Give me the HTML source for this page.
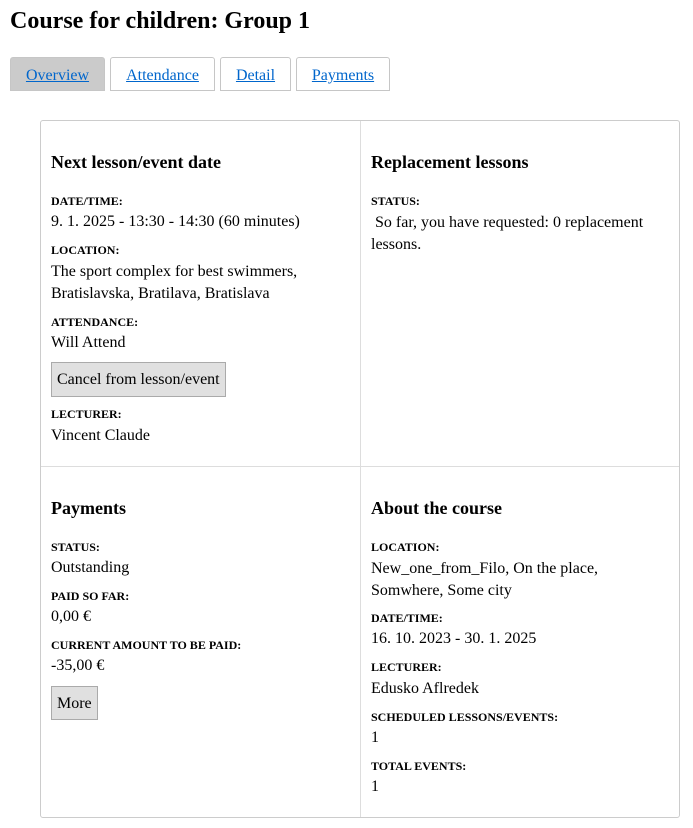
<!DOCTYPE html>
<html><head><meta charset="utf-8"><style>
body{margin:0;background:#fff;font-family:"Liberation Serif",serif;color:#000;width:693px;height:828px;position:relative;overflow:hidden}
.a{position:absolute;white-space:nowrap}
h1{position:absolute;left:10px;top:8px;margin:0;font-size:24px;font-weight:bold}
.tab{position:absolute;top:57px;border:1px solid #c6c6c6;border-radius:3px 3px 0 0;font-size:16px;line-height:36px;text-align:center;box-sizing:border-box;height:34px}
.tab span{color:#0066cc;text-decoration:underline}
.box{position:absolute;left:40px;top:120px;width:640px;height:698px;border:1px solid #ccc;border-radius:3px;box-sizing:border-box}
.h{font-size:18px;font-weight:bold}
.l{font-size:12px;font-weight:bold}
.v{font-size:16px;margin-top:2px}
.btn{position:absolute;background:#e0e0e0;border:1px solid #aaa;font-size:16px;box-sizing:border-box;line-height:34px;padding:0 5px}
</style></head><body>
<h1>Course for children: Group 1</h1>
<div class="tab" style="left:10px;width:95px;background:#cbcbcb"><span>Overview</span></div>
<div class="tab" style="left:110px;width:105px"><span>Attendance</span></div>
<div class="tab" style="left:220px;width:71px"><span>Detail</span></div>
<div class="tab" style="left:296px;width:94px"><span>Payments</span></div>
<div class="box"></div>
<div class="a" style="left:360px;top:121px;width:1px;height:696px;background:#ddd"></div>
<div class="a" style="left:41px;top:466px;width:638px;height:1px;background:#ddd"></div>

<div class="a h" style="left:51px;top:152px">Next lesson/event date</div>
<div class="a l" style="left:51px;top:194px">DATE/TIME:</div>
<div class="a v" style="left:51px;top:211px">9. 1. 2025 - 13:30 - 14:30 (60 minutes)</div>
<div class="a l" style="left:51px;top:243px">LOCATION:</div>
<div class="a v" style="left:51px;top:259px;line-height:22px">The sport complex for best swimmers,<br>Bratislavska, Bratilava, Bratislava</div>
<div class="a l" style="left:51px;top:315px">ATTENDANCE:</div>
<div class="a v" style="left:51px;top:332px">Will Attend</div>
<div class="btn" style="left:51px;top:362px;width:175px;height:35px">Cancel from lesson/event</div>
<div class="a l" style="left:51px;top:407px">LECTURER:</div>
<div class="a v" style="left:51px;top:425px">Vincent Claude</div>

<div class="a h" style="left:371px;top:152px">Replacement lessons</div>
<div class="a l" style="left:371px;top:194px">STATUS:</div>
<div class="a v" style="left:371px;top:210px;line-height:22px">&nbsp;So far, you have requested: 0 replacement<br>lessons.</div>

<div class="a h" style="left:51px;top:498px">Payments</div>
<div class="a l" style="left:51px;top:540px">STATUS:</div>
<div class="a v" style="left:51px;top:557px">Outstanding</div>
<div class="a l" style="left:51px;top:589px">PAID SO FAR:</div>
<div class="a v" style="left:51px;top:606px">0,00 €</div>
<div class="a l" style="left:51px;top:638px">CURRENT AMOUNT TO BE PAID:</div>
<div class="a v" style="left:51px;top:655px">-35,00 €</div>
<div class="btn" style="left:51px;top:686px;width:47px;height:34px">More</div>

<div class="a h" style="left:371px;top:498px">About the course</div>
<div class="a l" style="left:371px;top:540px">LOCATION:</div>
<div class="a v" style="left:371px;top:556px;line-height:22px">New_one_from_Filo, On the place,<br>Somwhere, Some city</div>
<div class="a l" style="left:371px;top:611px">DATE/TIME:</div>
<div class="a v" style="left:371px;top:628px">16. 10. 2023 - 30. 1. 2025</div>
<div class="a l" style="left:371px;top:660px">LECTURER:</div>
<div class="a v" style="left:371px;top:678px">Edusko Aflredek</div>
<div class="a l" style="left:371px;top:710px">SCHEDULED LESSONS/EVENTS:</div>
<div class="a v" style="left:371px;top:727px">1</div>
<div class="a l" style="left:371px;top:759px">TOTAL EVENTS:</div>
<div class="a v" style="left:371px;top:776px">1</div>
</body></html>
